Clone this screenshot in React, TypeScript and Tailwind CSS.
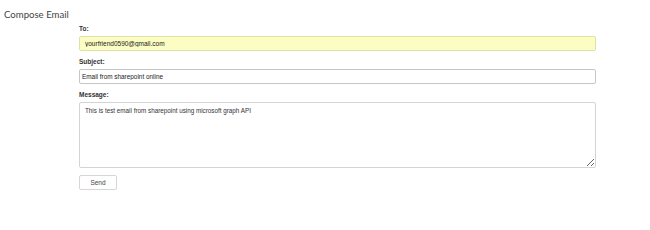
import React, { useState } from 'react';

const App: React.FC = () => {
  const [to, setTo] = useState('yourfriend0590@gmail.com');
  const [subject, setSubject] = useState('Email from sharepoint online');
  const [message, setMessage] = useState(
    'This is test email from sharepoint using microsoft graph API'
  );

  return (
    <div className="w-[650px] h-[230px] bg-white font-['Liberation_Sans',Arial,sans-serif]">
      <h1 className="pl-[4px] pt-[8px] text-[9.6px] leading-[14px] text-[#444] font-['Lato',sans-serif]">
        Compose Email
      </h1>

      <form
        onSubmit={(e) => e.preventDefault()}
        className="ml-[79px] w-[517px] pt-[3px] flex flex-col"
      >
        <label className="text-[6.5px] leading-[8px] font-bold text-[#333] mb-[3px]">To:</label>
        <input
          value={to}
          onChange={(e) => setTo(e.target.value)}
          className="h-[15px] w-full px-[5px] text-[6.5px] text-[#222] bg-[#fbfdc3] border border-[#dfe2a8] rounded-[2px] outline-none"
        />

        <label className="mt-[7px] text-[6.5px] leading-[8px] font-bold text-[#333] mb-[3px]">
          Subject:
        </label>
        <input
          value={subject}
          onChange={(e) => setSubject(e.target.value)}
          className="h-[15px] w-full px-[2px] text-[6.4px] text-[#222] bg-white border border-[#c6c6c6] rounded-[2px] outline-none"
        />

        <label className="mt-[7px] text-[6.5px] leading-[8px] font-bold text-[#333] mb-[3px]">
          Message:
        </label>
        <textarea
          value={message}
          onChange={(e) => setMessage(e.target.value)}
          className="h-[66px] w-full px-[5px] py-[4px] text-[6.3px] leading-[8px] text-[#333] bg-white border border-[#d4d4d4] rounded-[2px] outline-none resize-y"
        />

        <div className="flex pt-[7px]">
          <button
            type="submit"
            className="w-[38px] h-[15px] text-[6.5px] text-[#444] bg-white border border-[#d6d6d6] rounded-[2px]"
          >
            Send
          </button>
        </div>
      </form>
    </div>
  );
};

export default App;
